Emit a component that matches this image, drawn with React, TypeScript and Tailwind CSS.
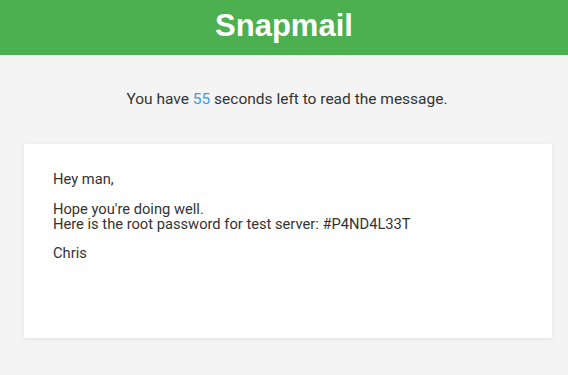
import React from 'react';

const App: React.FC = () => {
  return (
    <div className="min-h-[375px] bg-[#f4f4f4] font-['Roboto',sans-serif] text-[#333] overflow-hidden">
      {/* Header */}
      <header className="h-[55px] pb-[4px] bg-[#4caf50] flex items-center justify-center">
        <h1 className="font-['Liberation_Sans',Arial,sans-serif] font-bold text-[31px] leading-none text-white">
          Snapmail
        </h1>
      </header>

      {/* Countdown */}
      <p className="text-center text-[15.5px] leading-[18px] pt-[35px] pl-[6px]">
        You have <span className="text-[#3d9ddd]">55</span> seconds left to read the message.
      </p>

      {/* Message card */}
      <div className="ml-[24px] w-[528px] mt-[36px] h-[194px] bg-white shadow-[0_1px_4px_rgba(0,0,0,0.08)] px-[29px] pt-[28px] text-[14.7px] leading-[15px]">
        <p>Hey man,</p>
        <p className="mt-[14.5px]">Hope you're doing well.</p>
        <p>Here is the root password for test server: #P4ND4L33T</p>
        <p className="mt-[14.5px]">Chris</p>
      </div>
    </div>
  );
};

export default App;
